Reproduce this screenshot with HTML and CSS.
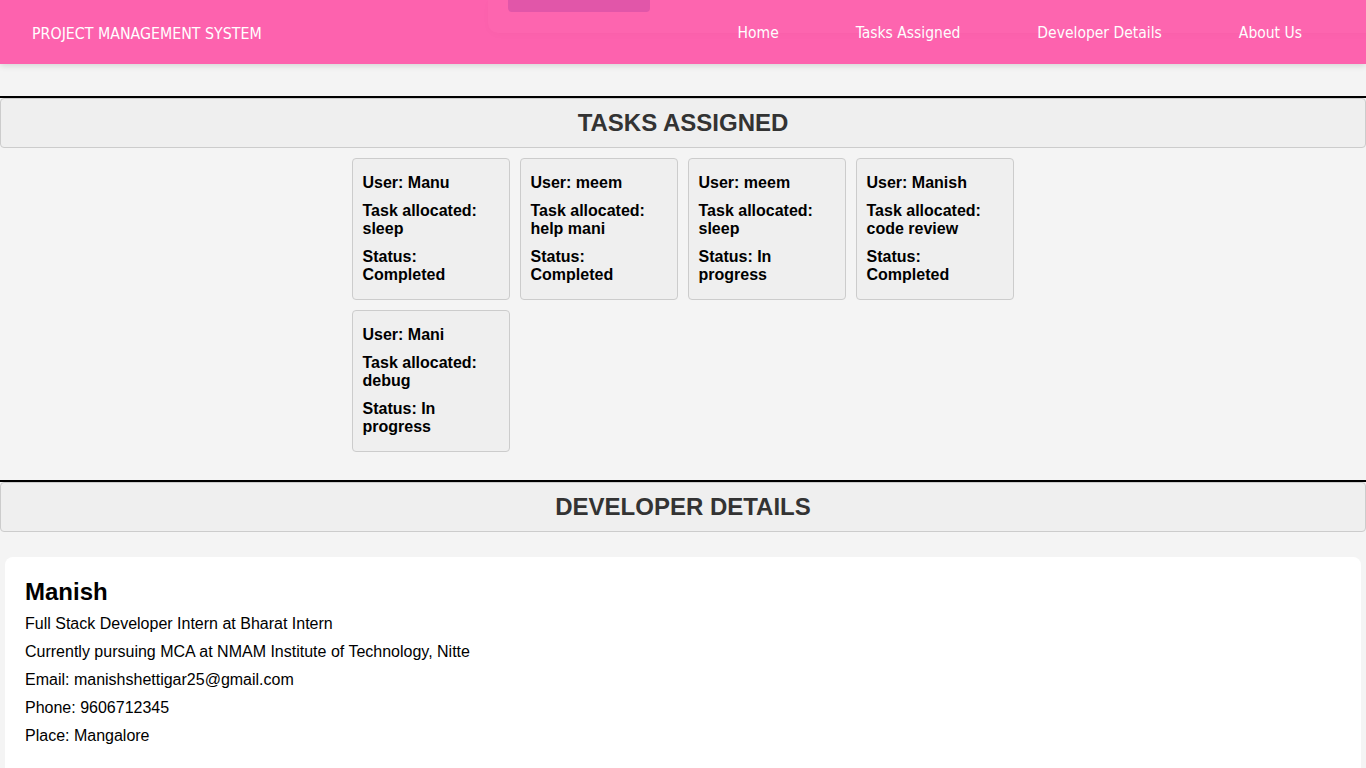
FILE: index.html
```html
<!DOCTYPE html>
<html>
<head>
<meta charset="utf-8">
<title>Project Management System</title>
<link rel="stylesheet" href="styles.css">
</head>
<body>
<header class="topbar">
  <div class="brand">PROJECT MANAGEMENT SYSTEM</div>
  <nav class="nav">
    <a href="#">Home</a>
    <a href="#">Tasks Assigned</a>
    <a href="#">Developer Details</a>
    <a href="#">About Us</a>
  </nav>
  <div class="ghost"><div class="ghost-tab"></div></div>
</header>

<hr class="rule rule-first">
<h2 class="section-title">TASKS ASSIGNED</h2>
<div class="tasks">
  <div class="task">
    <p>User: Manu</p>
    <p>Task allocated: sleep</p>
    <p>Status: Completed</p>
  </div>
  <div class="task">
    <p>User: meem</p>
    <p>Task allocated: help mani</p>
    <p>Status: Completed</p>
  </div>
  <div class="task">
    <p>User: meem</p>
    <p>Task allocated: sleep</p>
    <p>Status: In progress</p>
  </div>
  <div class="task">
    <p>User: Manish</p>
    <p>Task allocated: code review</p>
    <p>Status: Completed</p>
  </div>
  <div class="task">
    <p>User: Mani</p>
    <p>Task allocated: debug</p>
    <p>Status: In progress</p>
  </div>
</div>

<hr class="rule rule-second">
<h2 class="section-title">DEVELOPER DETAILS</h2>
<div class="dev">
  <h3>Manish</h3>
  <p>Full Stack Developer Intern at Bharat Intern</p>
  <p>Currently pursuing MCA at NMAM Institute of Technology, Nitte</p>
  <p>Email: manishshettigar25@gmail.com</p>
  <p>Phone: 9606712345</p>
  <p>Place: Mangalore</p>
</div>
</body>
</html>
```

FILE: styles.css
```css
* { box-sizing: border-box; }
html, body { margin: 0; padding: 0; }
body {
  background: #f4f4f4;
  font-family: "Liberation Sans", Arial, sans-serif;
  color: #000;
}
.topbar {
  position: relative;
  height: 64px;
  background: #fd62ae;
  display: flex;
  align-items: center;
  justify-content: space-between;
  padding: 2px 64px 0 32px;
  box-shadow: 0 2px 6px rgba(0,0,0,0.12);
  font-family: "DejaVu Sans Condensed", "DejaVu Sans", sans-serif;
  color: #fff;
}
.brand {
  font-size: 15.8px;
}
.nav { display: flex; gap: 77px; }
.nav a {
  color: #fff;
  text-decoration: none;
  font-size: 15.5px;
}
.ghost {
  position: absolute;
  left: 488px;
  top: 0;
  width: 900px;
  height: 33px;
  border-radius: 0 0 0 10px;
  background: rgba(255,255,255,0.02);
  box-shadow: 0 2px 8px rgba(0,0,0,0.02);
  pointer-events: none;
}
.ghost-tab {
  position: absolute;
  left: 20px;
  top: 0;
  width: 142px;
  height: 12px;
  border-radius: 0 0 4px 4px;
  background: #e156a9;
}
.rule {
  border: 0;
  height: 2px;
  background: #000;
  margin: 0;
}
.rule-first { margin-top: 32px; }
.rule-second { margin-top: 28px; }
.section-title {
  margin: 0;
  height: 50px;
  line-height: 48px;
  text-align: center;
  font-size: 24px;
  font-weight: bold;
  color: #333;
  background: #efefef;
  border: 1px solid #ccc;
  border-radius: 4px;
}
.tasks {
  width: 663px;
  margin: 10px auto 0;
  display: grid;
  grid-template-columns: repeat(4, 158px);
  gap: 10px 10px;
}
.task {
  background: #efefef;
  border: 1px solid #ccc;
  border-radius: 4px;
  padding: 15px 10px 5px 10px;
  height: 142px;
}
.task p {
  margin: 0 0 10px;
  font-size: 16px;
  font-weight: bold;
  line-height: 18px;
}
.dev {
  margin: 25px 5px 0;
  background: #fff;
  border-radius: 8px;
  padding: 21px 20px 20px;
  min-height: 220px;
}
.dev h3 {
  margin: 0 0 9px;
  font-size: 24px;
  line-height: 28px;
  font-weight: bold;
}
.dev p {
  margin: 0 0 10px;
  font-size: 16px;
  line-height: 18px;
}
```
